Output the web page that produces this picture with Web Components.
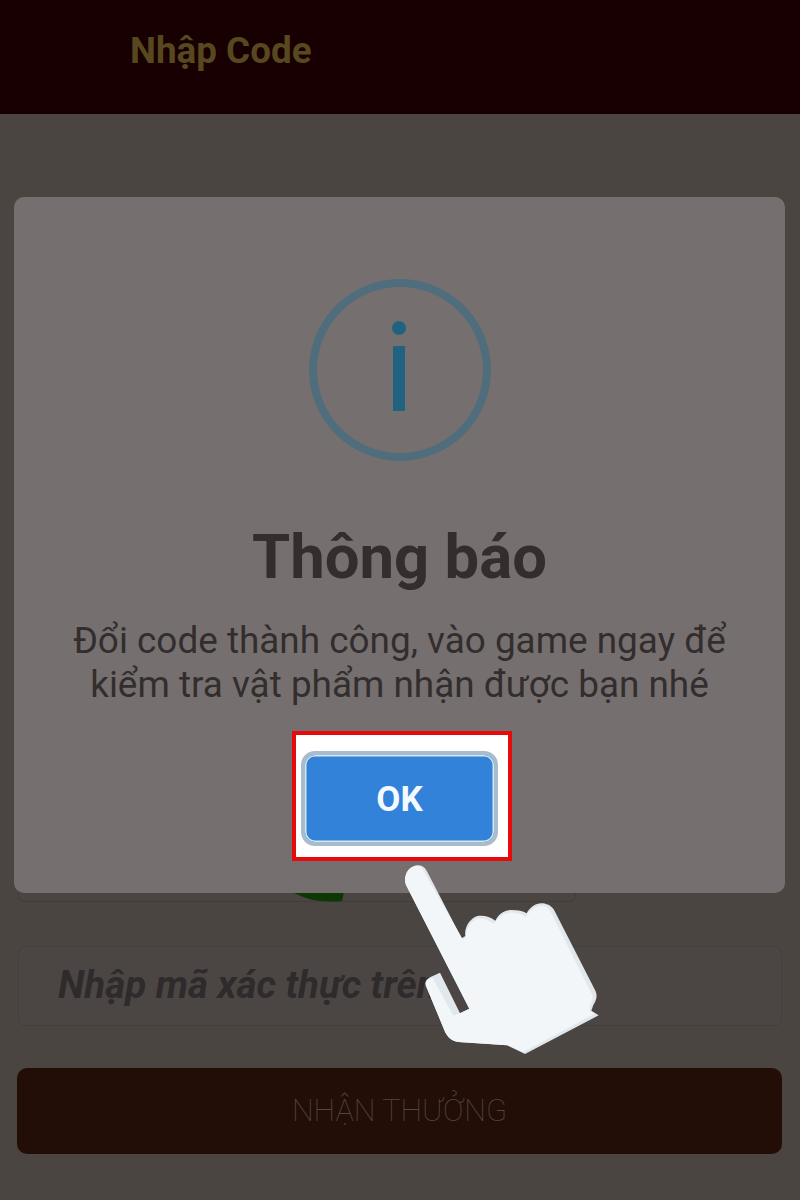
<!DOCTYPE html>
<html lang="vi">
<head>
<meta charset="utf-8">
<title>Nhập Code</title>
<style>
    html, body { margin: 0; padding: 0; background: #4a4541; }
    body { font-family: Roboto, "Liberation Sans", sans-serif; }
</style>
</head>
<body>
<code-page>
    <app-header slot="header">Nhập Code</app-header>
    <code-form slot="form"></code-form>
    <notice-dialog slot="overlay" heading="Thông báo">
        Đổi code thành công, vào game ngay để<br>kiểm tra vật phẩm nhận được bạn nhé
    </notice-dialog>
    <tap-hand slot="overlay"></tap-hand>
</code-page>

<script>
class CodePage extends HTMLElement {
    constructor() {
        super();
        this.attachShadow({ mode: 'open' });
        this.shadowRoot.innerHTML = `
            <style>
                :host {
                    display: flex;
                    flex-direction: column;
                    position: relative;
                    width: 800px;
                    height: 1200px;
                    overflow: hidden;
                    background: #4a4541;
                }
            </style>
            <slot name="header"></slot>
            <slot name="form"></slot>
            <slot name="overlay"></slot>
        `;
    }
}

class AppHeader extends HTMLElement {
    constructor() {
        super();
        this.attachShadow({ mode: 'open' });
        this.shadowRoot.innerHTML = `
            <style>
                :host {
                    display: flex;
                    flex: none;
                    align-items: center;
                    box-sizing: border-box;
                    height: 114px;
                    padding: 0 0 13px 130px;
                    background: #180002;
                    color: #57481f;
                    font: 700 36.8px Roboto, sans-serif;
                }
            </style>
            <slot></slot>
        `;
    }
}

class CodeForm extends HTMLElement {
    constructor() {
        super();
        this.attachShadow({ mode: 'open' });
        this.shadowRoot.innerHTML = `
            <style>
                :host {
                    display: flex;
                    flex: 1;
                    flex-direction: column;
                    justify-content: flex-end;
                    box-sizing: border-box;
                    padding: 0 18px 46px 17px;
                    font-family: Roboto, sans-serif;
                }
                .captcha {
                    position: relative;
                    box-sizing: border-box;
                    width: 558px;
                    height: 80px;
                    margin: 0 0 44px 1px;
                    border: 1px solid #423d3b;
                    border-radius: 6px;
                }
                .captcha svg {
                    position: absolute;
                    left: 270px;
                    bottom: -2px;
                }
                .field {
                    display: flex;
                    align-items: center;
                    box-sizing: border-box;
                    height: 80px;
                    margin: 0 0 42px 1px;
                    padding: 0 0 3px 39px;
                    border: 1px solid #454040;
                    border-radius: 8px;
                    background: #4b4644;
                    color: #2f2a2b;
                    font: italic 700 38.5px Roboto, sans-serif;
                }
                .submit {
                    display: flex;
                    align-items: center;
                    justify-content: center;
                    box-sizing: border-box;
                    height: 86px;
                    padding-bottom: 2px;
                    border-radius: 10px;
                    background: #220e07;
                    color: #55453e;
                    font: 100 30.7px Roboto, sans-serif;
                }
            </style>
            <div class="captcha">
                <svg width="56" height="14" viewBox="0 0 56 14">
                    <path d="M3 3 H55 L53 12 Q30 14 14 8 Z" fill="#0d3806"/>
                </svg>
            </div>
            <div class="field">Nhập mã xác thực trên</div>
            <div class="submit">NHẬN THƯỞNG</div>
        `;
    }
}

class NoticeDialog extends HTMLElement {
    constructor() {
        super();
        this.attachShadow({ mode: 'open' });
        this.shadowRoot.innerHTML = `
            <style>
                :host {
                    position: absolute;
                    left: 14px;
                    top: 197px;
                    display: flex;
                    flex-direction: column;
                    align-items: center;
                    box-sizing: border-box;
                    width: 771px;
                    height: 696px;
                    padding-top: 82px;
                    border-radius: 10px;
                    background: #75706f;
                    color: #332d2d;
                    font-family: Roboto, sans-serif;
                    text-align: center;
                }
                svg { display: block; }
                h2 {
                    margin: 60px 0 0;
                    font-size: 61.6px;
                    font-weight: 700;
                    line-height: 72px;
                }
                p {
                    margin: 26px 0 0;
                    font-size: 36.9px;
                    line-height: 44px;
                }
                .highlight {
                    display: flex;
                    align-items: center;
                    justify-content: center;
                    box-sizing: border-box;
                    width: 220px;
                    height: 130px;
                    margin: 24px 0 0 5px;
                    border: 4px solid #e60a0a;
                    background: #fff;
                }
                button {
                    box-sizing: border-box;
                    width: 197px;
                    height: 95px;
                    margin: 5px 5px 0 0;
                    padding: 2px 0 0;
                    border: 4px solid #a9bccd;
                    border-radius: 14px;
                    background: #3182d8;
                    box-shadow: inset 0 0 0 1.5px #cfe8f4;
                    color: #f4faff;
                    font: 700 35px Roboto, sans-serif;
                }
            </style>
            <svg width="182" height="182" viewBox="0 0 182 182">
                <circle cx="91" cy="91" r="87" fill="none" stroke="#4f6d7c" stroke-width="8"/>
                <circle cx="90" cy="49" r="7" fill="#20627f"/>
                <rect x="84" y="67" width="12" height="65" fill="#20627f"/>
            </svg>
            <h2></h2>
            <p><slot></slot></p>
            <div class="highlight"><button>OK</button></div>
        `;
    }

    connectedCallback() {
        this.shadowRoot.querySelector('h2').textContent = this.getAttribute('heading');
    }
}

class TapHand extends HTMLElement {
    constructor() {
        super();
        this.attachShadow({ mode: 'open' });
        this.shadowRoot.innerHTML = `
            <style>
                :host {
                    position: absolute;
                    left: 390px;
                    top: 850px;
                    width: 230px;
                    height: 220px;
                }
                svg { display: block; }
            </style>
            <svg width="230" height="220" viewBox="0 0 690 660">
                <!-- shaded edge first, the lighter body sits on top of it -->
                <path fill="#e1e7eb" d="M48 105 C40 85 50 60 65 52 C80 42 100 44 110 62 L215 265 L226 258 C222 232 240 205 262 198 C282 195 300 200 316 212 C325 195 340 180 365 180 C385 180 398 183 410 190 C420 170 440 158 458 160 C475 162 488 170 495 185 L615 420 C622 435 622 445 610 465 L604 482 L626 496 L405 612 L352 586 L205 576 C185 573 172 560 165 545 L108 408 C104 394 110 388 120 382 L150 368 L210 490 L238 476 Z"/>
                <path fill="#f2f6f8" d="M48 105 C40 85 50 60 65 52 C75 46 86 46 92 50 C98 55 100 60 102 66 L218 268 L228 262 C226 238 242 214 262 206 C282 203 298 210 312 222 C322 203 342 188 365 188 C385 188 395 194 408 200 C418 180 440 166 458 168 C472 170 478 178 484 190 L604 430 C610 440 608 450 600 468 L598 484 L616 490 L400 606 L352 586 L205 576 C185 573 172 560 165 545 L108 408 C104 394 110 388 128 384 L190 497 L210 490 L238 476 Z"/>
            </svg>
        `;
    }
}

customElements.define('code-page', CodePage);
customElements.define('app-header', AppHeader);
customElements.define('code-form', CodeForm);
customElements.define('notice-dialog', NoticeDialog);
customElements.define('tap-hand', TapHand);
</script>
</body>
</html>
